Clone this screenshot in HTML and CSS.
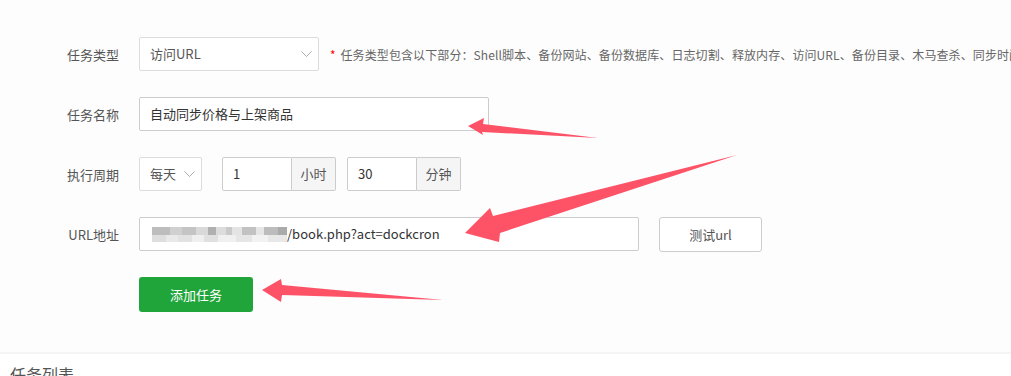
FILE: index.html
```html
<!DOCTYPE html>
<html lang="zh-CN">
<head>
    <meta charset="UTF-8">
    <title>计划任务</title>
    <link rel="stylesheet" href="styles.css">
</head>
<body>
    <div class="page">
        <div class="crontab">
            <div class="row">
                <label class="lbl">任务类型</label>
                <div class="select type">
                    <span>访问URL</span>
                    <svg class="arrow-down" width="11" height="7" viewBox="0 0 11 7"><polyline points="0.5,0.5 5.5,5.5 10.5,0.5" fill="none" stroke="#aaa" stroke-width="1"/></svg>
                </div>
                <div class="tips"><em>*</em> 任务类型包含以下部分：Shell脚本、备份网站、备份数据库、日志切割、释放内存、访问URL、备份目录、木马查杀、同步时间</div>
            </div>

            <div class="row">
                <label class="lbl">任务名称</label>
                <div class="input name">自动同步价格与上架商品</div>
            </div>

            <div class="row">
                <label class="lbl">执行周期</label>
                <div class="select cycle">
                    <span>每天</span>
                    <svg class="arrow-down" width="11" height="7" viewBox="0 0 11 7"><polyline points="0.5,0.5 5.5,5.5 10.5,0.5" fill="none" stroke="#aaa" stroke-width="1"/></svg>
                </div>
                <div class="group">
                    <div class="input num">1</div>
                    <span class="addon">小时</span>
                </div>
                <div class="group">
                    <div class="input num">30</div>
                    <span class="addon">分钟</span>
                </div>
            </div>

            <div class="row">
                <label class="lbl">URL地址</label>
                <div class="input url"><span class="mosaic"></span>/book.php?act=dockcron</div>
                <button class="btn-test">测试url</button>
            </div>

            <div class="row submit">
                <button class="btn-add">添加任务</button>
            </div>
        </div>

        <div class="list">
            <h3>任务列表</h3>
        </div>

        <!-- 标注箭头 -->
        <svg class="marks" width="1011" height="376" viewBox="0 0 1011 376">
            <polygon points="468,126 484,118 483,124 598,138 482,132 483,135" fill="#fe5267"/>
            <polygon points="465,233 490,208 493,216 737,155 500,233 499,242" fill="#fe5267"/>
            <polygon points="262,290 281,279 282,285 443,300 282,295 281,302" fill="#fe5267"/>
        </svg>
    </div>
</body>
</html>
```

FILE: styles.css
```css
*{
    margin: 0;
    padding: 0;
    box-sizing: border-box;
}
body{
    font-family: "Noto Sans CJK SC", "Noto Sans", sans-serif;
    font-size: 13px;
    color: #555;
    background: #fff;
    overflow: hidden;
}
.page{
    position: relative;
    width: 1011px;
    height: 376px;
    overflow: hidden;
}
.crontab{
    padding-top: 37px;
    height: 354px;
    background: #fdfdfd;
    border-bottom: 2px solid #f4f4f4;
}
.row{
    display: flex;
    align-items: center;
    height: 34px;
    margin-bottom: 26px;
    white-space: nowrap;
}
.row > *{
    flex-shrink: 0;
}
.lbl{
    width: 119px;
    margin-right: 20px;
    text-align: right;
    color: #555;
}
.select,
.input{
    height: 34px;
    line-height: 32px;
    border: 1px solid #ccc;
    border-radius: 2px;
    background: #fff;
    padding: 0 10px;
}
.select{
    display: flex;
    align-items: center;
    justify-content: space-between;
    border-color: #dcdcdc;
    color: #555;
}
.select.type{
    width: 180px;
}
.select.cycle{
    width: 63px;
    margin-right: 20px;
}
.arrow-down{
    margin-right: -4px;
}
.row > .tips{
    flex-shrink: 1;
    min-width: 0;
    overflow: hidden;
    margin-left: 11px;
    font-size: 12px;
    letter-spacing: 0.1px;
    color: #666;
}
.tips em{
    font-style: normal;
    color: #f00;
    margin-right: 2px;
}
.input{
    color: #333;
}
.input.name{
    width: 350px;
}
.group{
    display: flex;
    margin-right: 11px;
}
.input.num{
    width: 70px;
    border-radius: 2px 0 0 2px;
}
.addon{
    height: 34px;
    line-height: 32px;
    width: 44px;
    text-align: center;
    background: #f5f5f5;
    border: 1px solid #ccc;
    border-left: none;
    border-radius: 0 2px 2px 0;
    color: #555;
}
.input.url{
    width: 500px;
    display: flex;
    align-items: center;
    padding-left: 12px;
}
.mosaic{
    display: inline-block;
    width: 135px;
    height: 15px;
    margin-top: 1px;
    filter: blur(0.6px);
    background:
        linear-gradient(to right, #bdbdbd 0 18px, #d0d0d0 18px 30px, #c4c4c4 30px 44px, #d9d9d9 44px 56px, #b0b0b0 56px 64px, #dcdcdc 64px 74px, #c9c9c9 74px 80px, #e4e4e4 80px 90px, #c2c2c2 90px 104px, #e6e6e6 104px 112px, #bcbcbc 112px 126px, #aaa 126px 135px) top / 100% 8px no-repeat,
        linear-gradient(to right, #dedede 0 14px, #e9e9e9 14px 26px, #e2e2e2 26px 40px, #efefef 40px 52px, #e0e0e0 52px 66px, #f0f0f0 66px 84px, #e6e6e6 84px 100px, #f2f2f2 100px 116px, #e8e8e8 116px 135px) bottom / 100% 7px no-repeat;
}
.btn-test{
    margin-left: 20px;
    width: 103px;
    height: 35px;
    border: 1px solid #ccc;
    border-radius: 3px;
    background: #fff;
    font-family: inherit;
    font-size: 13px;
    color: #555;
}
.row.submit{
    padding-left: 139px;
    height: 35px;
    margin-top: 1px;
}
.btn-add{
    width: 114px;
    height: 35px;
    border: none;
    border-radius: 3px;
    background: #20a53a;
    color: #fff;
    font-family: inherit;
    font-size: 13px;
}
.list{
    padding: 10px 10px 0;
    background: #fff;
}
.list h3{
    font-size: 16px;
    font-weight: normal;
    color: #555;
    line-height: 20px;
}
.marks{
    position: absolute;
    left: 0;
    top: 0;
    pointer-events: none;
}
```
